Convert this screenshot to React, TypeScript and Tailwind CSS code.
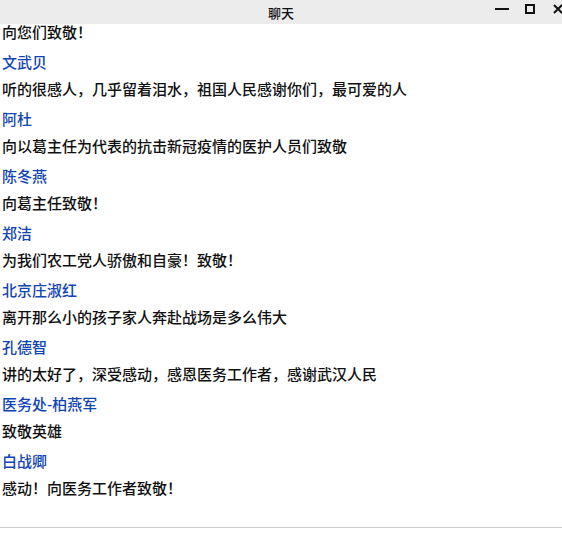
import React from 'react';

const messages = [
  { name: '文武贝', text: '听的很感人，几乎留着泪水，祖国人民感谢你们，最可爱的人' },
  { name: '阿杜', text: '向以葛主任为代表的抗击新冠疫情的医护人员们致敬' },
  { name: '陈冬燕', text: '向葛主任致敬！' },
  { name: '郑洁', text: '为我们农工党人骄傲和自豪！致敬！' },
  { name: '北京庄淑红', text: '离开那么小的孩子家人奔赴战场是多么伟大' },
  { name: '孔德智', text: '讲的太好了，深受感动，感恩医务工作者，感谢武汉人民' },
  { name: '医务处-柏燕军', text: '致敬英雄' },
  { name: '白战卿', text: '感动！向医务工作者致敬！' },
];

export default function App() {
  return (
    <div className="w-[562px] h-[534px] bg-white overflow-hidden font-['Noto_Sans_CJK_SC','Liberation_Sans',sans-serif]">
      {/* title bar */}
      <div className="relative h-6 bg-[#ececec] flex items-center justify-center">
        <span className="text-[13px] leading-none text-[#111] font-medium">聊天</span>
        <div className="absolute right-0 top-0 h-6 flex items-center">
          <div className="w-[14px] h-[2px] bg-[#111] mr-[16px] mt-[-6px]" />
          <div className="w-[10px] h-[10px] border-2 border-[#111] mr-[18px] mt-[-6px]" />
          <svg width="10" height="10" viewBox="0 0 10 10" className="mr-[-1px] mt-[-6px]">
            <path d="M1 1 L9 9 M9 1 L1 9" stroke="#111" strokeWidth="2" />
          </svg>
        </div>
      </div>

      {/* chat list */}
      <div className="h-[504px] px-[2px] text-[15px]">
        <div className="-mt-[1px] leading-[18px] text-[#111] font-medium">向您们致敬！</div>
        {messages.map((m, i) => (
          <div key={i}>
            <div className="mt-[12px] leading-[18px] text-[#1144b4] font-medium">{m.name}</div>
            <div className="mt-[9px] leading-[18px] text-[#111] font-medium">{m.text}</div>
          </div>
        ))}
      </div>
      <div className="border-t border-[#cccccc]" />
    </div>
  );
}
